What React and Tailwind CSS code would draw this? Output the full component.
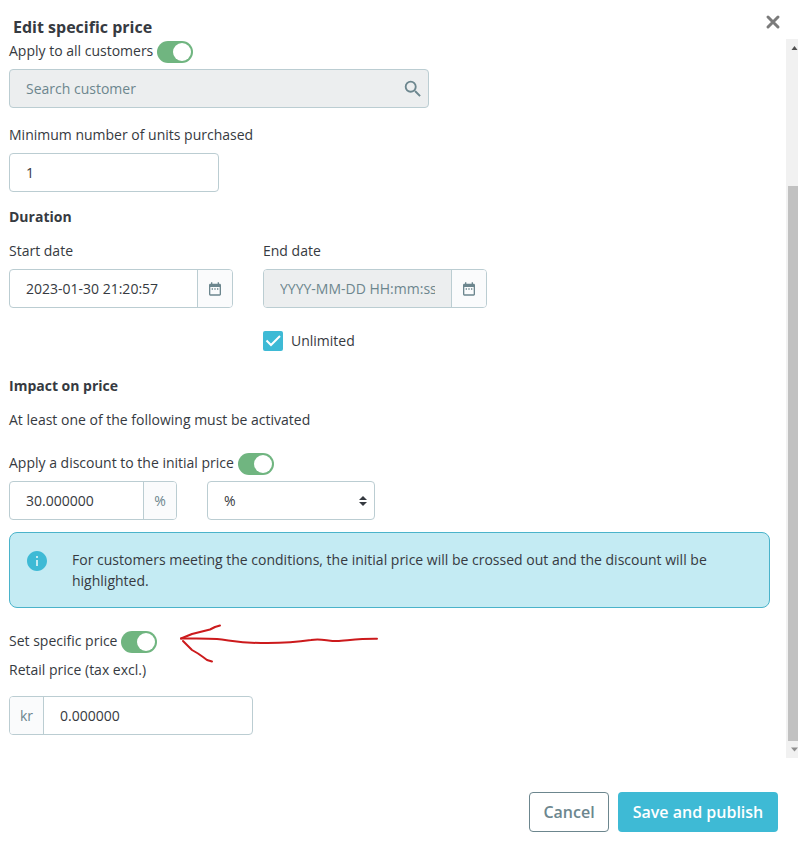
import React, { useState } from 'react';
import { MdDateRange, MdInfo, MdSearch } from 'react-icons/md';

const inputClass = 'h-full w-full min-w-0 px-4 text-[#363a41] outline-none placeholder:text-[#6c868e]';
const groupClass = 'flex h-[39px] w-full overflow-hidden rounded border border-[#bbcdd2] bg-white';

function Toggle({ id, label }) {
  const [on, setOn] = useState(true);

  return (
    <div className="flex items-start gap-1 pb-1.5">
      <label htmlFor={id} className="leading-5">{label}</label>
      <input
        id={id}
        type="checkbox"
        role="switch"
        checked={on}
        onChange={(e) => setOn(e.target.checked)}
        className="h-[22px] w-9 shrink-0 cursor-pointer appearance-none rounded-full bg-[#b3c7cd] p-0.5 before:block before:size-[18px] before:rounded-full before:bg-white checked:bg-[#70b580] checked:before:ml-3.5"
      />
    </div>
  );
}

function DateField({ id, label, children, ...props }) {
  return (
    <div className="w-full max-w-[224px]">
      <label htmlFor={id} className="mb-2 block">{label}</label>
      <div className={groupClass}>
        <input id={id} type="text" className={`${inputClass} disabled:bg-[#eceeef]`} {...props} />
        <button
          type="button"
          aria-label={`Pick ${label.toLowerCase()}`}
          className="flex w-[35px] shrink-0 items-center justify-center border-l border-[#bbcdd2] bg-[#fafbfc] text-[#6c868e]"
        >
          <MdDateRange className="size-4" />
        </button>
      </div>
      {children}
    </div>
  );
}

function SectionTitle({ children }) {
  return <h2 className="mb-[13px] font-bold">{children}</h2>;
}

function Scrollbar() {
  return (
    <div className="flex w-3 shrink-0 flex-col items-end bg-[#f1f1f1]" aria-hidden="true">
      <svg className="h-4 w-2.5 shrink-0" viewBox="0 0 10 16">
        <path d="M3.5 11 L6.5 7 L9.5 11 Z" fill="#505050" />
      </svg>
      <div className="w-2.5 flex-[131]"></div>
      <div className="w-2.5 flex-[555] bg-[#c1c1c1]"></div>
      <svg className="h-[17px] w-2.5 shrink-0" viewBox="0 0 10 17">
        <path d="M3 6.5 H10 L6.5 10.5 Z" fill="#8f8f8f" />
      </svg>
    </div>
  );
}

function App() {
  const [unlimited, setUnlimited] = useState(true);

  return (
    <div className="min-h-screen bg-white font-['Open_Sans',sans-serif] text-sm leading-[21px] text-[#363a41]">
      <header className="flex h-[39px] items-start justify-between pl-[13px] pr-[17px]">
        <h1 className="pt-4 text-base leading-[22px] font-bold">Edit specific price</h1>
        <button type="button" aria-label="Close" className="pt-3.5">
          <svg className="size-4" viewBox="0 0 16 16" fill="none" stroke="#7b7b7b" strokeWidth="3" strokeLinecap="round">
            <path d="M3 3 L13 13 M13 3 L3 13" />
          </svg>
        </button>
      </header>

      <div className="flex">
        <main className="min-w-0 flex-1 pt-0.5 pr-4 pb-[23px] pl-[9px]">
          <Toggle id="all-customers" label="Apply to all customers" />
          <div className="flex h-[39px] w-full max-w-[420px] items-center overflow-hidden rounded border border-[#bbcdd2] bg-[#eceeef]">
            <input type="search" aria-label="Search customer" placeholder="Search customer" disabled className={inputClass} />
            <MdSearch className="mr-1 size-[22px] shrink-0 text-[#6c868e]" />
          </div>

          <div className="mt-4 mb-3.5">
            <label htmlFor="min-units" className="mb-2 block">Minimum number of units purchased</label>
            <div className="max-w-[210px]">
              <div className={groupClass}>
                <input id="min-units" type="text" defaultValue="1" className={inputClass} />
              </div>
            </div>
          </div>

          <SectionTitle>Duration</SectionTitle>
          <div className="mb-6 flex gap-[30px]">
            <DateField id="start-date" label="Start date" defaultValue="2023-01-30 21:20:57" />
            <DateField id="end-date" label="End date" placeholder="YYYY-MM-DD HH:mm:ss" disabled={unlimited}>
              <label className="mt-[22px] flex w-fit items-center gap-2">
                <span className="relative size-5">
                  <input
                    type="checkbox"
                    checked={unlimited}
                    onChange={(e) => setUnlimited(e.target.checked)}
                    className="peer block size-5 appearance-none rounded-xs border-2 border-[#b3c7cd] checked:border-[#3ebad5] checked:bg-[#3ebad5]"
                  />
                  <svg className="pointer-events-none absolute inset-0 hidden size-5 peer-checked:block" viewBox="0 0 20 20" fill="none" stroke="#fff" strokeWidth="2">
                    <path d="M3.5 9.5 L8 14 L17 5" />
                  </svg>
                </span>
                Unlimited
              </label>
            </DateField>
          </div>

          <SectionTitle>Impact on price</SectionTitle>
          <p className="mb-[23px]">At least one of the following must be activated</p>

          <Toggle id="apply-discount" label="Apply a discount to the initial price" />
          <div className="flex gap-[30px]">
            <div className="w-full max-w-[168px]">
              <div className={groupClass}>
                <input type="text" aria-label="Discount value" defaultValue="30.000000" className={inputClass} />
                <span className="flex w-[33px] shrink-0 items-center justify-center border-l border-[#bbcdd2] bg-[#fafbfc] text-[#6c868e]">%</span>
              </div>
            </div>
            <div className="relative w-full max-w-[168px]">
              <div className={groupClass}>
                <select aria-label="Discount type" className={`${inputClass} appearance-none`}>
                  <option>%</option>
                  <option>kr</option>
                </select>
              </div>
              <svg className="pointer-events-none absolute top-3.5 right-2 h-3 w-2" viewBox="0 0 8 12" fill="#363a41">
                <path d="M4 1 L8 5 H0 Z M0 7 H8 L4 11 Z" />
              </svg>
            </div>
          </div>

          <div className="mt-3 mb-[23px] flex gap-[23px] rounded-lg border border-[#4ab3ca] bg-[#c4ebf3] px-[15px] py-4">
            <MdInfo className="size-6 shrink-0 text-[#3ebad5]" />
            <p>
              For customers meeting the conditions, the initial price will be crossed out and the discount will be highlighted.
            </p>
          </div>

          <div className="relative">
            <Toggle id="specific-price" label="Set specific price" />
            {/* hand drawn pointer to the switch */}
            <svg
              className="pointer-events-none absolute -top-2 left-[170px] h-10 w-[200px]"
              viewBox="0 0 200 40"
              fill="none"
              stroke="#cc1a1c"
              strokeWidth="2"
              strokeLinecap="round"
              strokeLinejoin="round"
            >
              <path d="M2 15.5 C12 15.5 26 15 38 16 C52 17.5 62 20 82 20 C100 20.3 119 19 132 17 C142 15.2 148 18 158 18 C168 17.5 180 15.5 198 15.7" />
              <path d="M2 15.5 L13 11 L19 9.5 L27 7.5 L31 6.5 L36 4 L41 2.5" />
              <path d="M4 18 L8 22 L13 27 L19 30.5 L24 34 L28 37 L33 38.5" />
            </svg>
          </div>
          <label htmlFor="retail-price" className="mb-4 block">Retail price (tax excl.)</label>
          <div className="max-w-[244px]">
            <div className={groupClass}>
              <span className="flex w-[34px] shrink-0 items-center justify-center border-r border-[#bbcdd2] bg-[#fafbfc] text-[#6c868e]">kr</span>
              <input id="retail-price" type="text" defaultValue="0.000000" className={inputClass} />
            </div>
          </div>
        </main>
        <Scrollbar />
      </div>

      <footer className="flex justify-end gap-[9px] pt-[34px] pr-5 pb-5 text-base font-semibold">
        <button type="button" className="h-10 w-20 rounded border border-[#6c868e] text-[#6c868e]">Cancel</button>
        <button type="button" className="h-10 w-40 rounded bg-[#3ebad5] text-white">Save and publish</button>
      </footer>
    </div>
  );
}

export default App;
